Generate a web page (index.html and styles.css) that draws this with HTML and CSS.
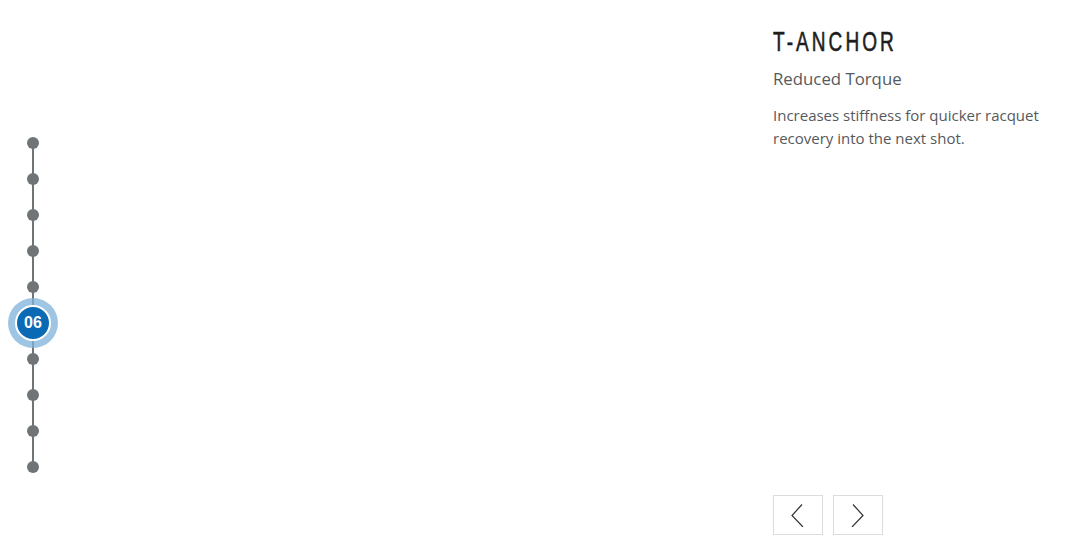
FILE: index.html
```html
<!DOCTYPE html>
<html>
<head>
<meta charset="utf-8">
<link rel="stylesheet" href="styles.css">
</head>
<body>
<div class="page">
  <nav class="timeline">
    <div class="slot"><span class="dot"></span></div>
    <div class="slot"><span class="dot"></span></div>
    <div class="slot"><span class="dot"></span></div>
    <div class="slot"><span class="dot"></span></div>
    <div class="slot"><span class="dot"></span></div>
    <div class="slot"><span class="active"><span class="active-inner">06</span></span></div>
    <div class="slot"><span class="dot"></span></div>
    <div class="slot"><span class="dot"></span></div>
    <div class="slot"><span class="dot"></span></div>
    <div class="slot"><span class="dot"></span></div>
  </nav>
  <section class="content">
    <h1 class="title">T-ANCHOR</h1>
    <h2 class="subtitle">Reduced Torque</h2>
    <p class="desc">Increases stiffness for quicker racquet recovery into the next shot.</p>
    <div class="controls">
      <button class="btn" aria-label="Previous"><svg width="14" height="24" viewBox="0 0 14 24"><path d="M11 1.5 L1 12.5 L12 24" fill="none" stroke="#333" stroke-width="1.2"/></svg></button>
      <button class="btn" aria-label="Next"><svg width="14" height="24" viewBox="0 0 14 24"><path d="M2 1.5 L12 12.5 L1 24" fill="none" stroke="#333" stroke-width="1.2"/></svg></button>
    </div>
  </section>
</div>
</body>
</html>
```
FILE: styles.css
```css
html, body {
  margin: 0;
  padding: 0;
  background: #fff;
}
.page {
  display: flex;
  height: 546px;
  width: 1068px;
  overflow: hidden;
}
.timeline {
  position: relative;
  width: 66px;
  margin-top: 125px;
  display: flex;
  flex-direction: column;
  align-self: flex-start;
}
.timeline::before {
  content: "";
  position: absolute;
  left: 32px;
  top: 18px;
  bottom: 18px;
  width: 2px;
  background: #6f7477;
}
.slot {
  position: relative;
  height: 36px;
  display: flex;
  align-items: center;
  justify-content: center;
}
.dot {
  width: 12px;
  height: 12px;
  border-radius: 50%;
  background: #6f7477;
}
.active {
  flex: none;
  width: 50px;
  height: 50px;
  border-radius: 50%;
  background: rgba(125, 178, 218, 0.75);
  display: flex;
  align-items: center;
  justify-content: center;
}
.active-inner {
  width: 32px;
  height: 32px;
  border-radius: 50%;
  background: #0b6ab4;
  border: 2px solid #fff;
  color: #fff;
  font-family: "Liberation Sans", Arial, sans-serif;
  font-weight: 700;
  font-size: 16px;
  display: flex;
  align-items: center;
  justify-content: center;
}
.content {
  margin-left: 707px;
  width: 290px;
  display: flex;
  flex-direction: column;
  padding-top: 26px;
  padding-bottom: 11px;
  box-sizing: border-box;
  font-family: "Open Sans", "Liberation Sans", sans-serif;
}
.title {
  margin: 0;
  font-family: "Liberation Sans", Arial, sans-serif;
  font-weight: 400;
  font-size: 28px;
  line-height: 32px;
  letter-spacing: 4.5px;
  color: #1d1d1d;
  -webkit-text-stroke: 0.6px #1d1d1d;
  transform: scaleX(0.68);
  transform-origin: left center;
  white-space: nowrap;
}
.subtitle {
  margin: 9px 0 0;
  font-weight: 400;
  font-size: 16.8px;
  line-height: 24px;
  color: #555a5e;
}
.desc {
  margin: 13px 0 0;
  font-size: 15px;
  line-height: 23px;
  color: #55595c;
}
.controls {
  margin-top: auto;
  display: flex;
  gap: 10px;
}
.btn {
  width: 50px;
  height: 40px;
  padding: 0;
  border: 1px solid #dcdcdc;
  background: #fff;
  display: flex;
  align-items: center;
  justify-content: center;
}
```
